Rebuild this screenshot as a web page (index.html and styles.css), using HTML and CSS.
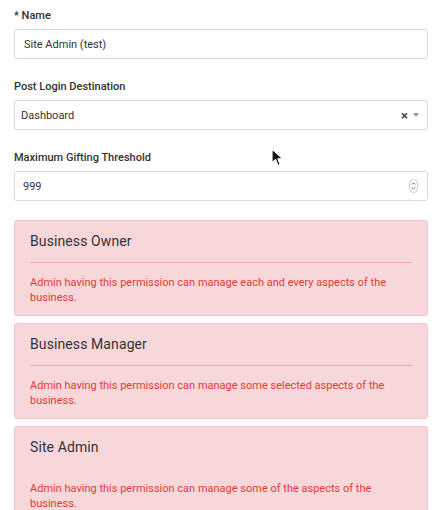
FILE: index.html
```html
<!DOCTYPE html>
<html lang="en">
<head>
  <meta charset="UTF-8" />
  <title>Edit Role</title>
  <link rel="stylesheet" href="styles.css">
</head>

<body>
  <form class="role-form">
    <div class="fields">
      <div class="field">
        <label class="field-label">* Name</label>
        <div class="control">Site Admin (test)</div>
      </div>

      <div class="field">
        <label class="field-label">Post Login Destination</label>
        <div class="control select">
          <span>Dashboard</span>
          <span class="select-icons">
            <span class="clear">&#215;</span>
            <span class="caret"></span>
          </span>
        </div>
      </div>

      <div class="field">
        <label class="field-label">Maximum Gifting Threshold</label>
        <div class="control number">
          <span>999</span>
          <!-- spinner buttons of the number input -->
          <svg class="spinner" width="9" height="14" viewBox="0 0 9 14">
            <rect x="0.5" y="0.5" width="8" height="13" rx="4" fill="#fff" stroke="#c8c8c8" />
            <path d="M2.8 5.5 L4.5 3.8 L6.2 5.5" fill="none" stroke="#666" stroke-width="0.9" />
            <path d="M2.8 8.5 L4.5 10.2 L6.2 8.5" fill="none" stroke="#666" stroke-width="0.9" />
          </svg>
        </div>
      </div>
    </div>

    <!-- permission cards -->
    <div class="perm-card">
      <div class="perm-title">Business Owner</div>
      <div class="perm-text">Admin having this permission can manage each and every aspects of the business.</div>
    </div>

    <div class="perm-card">
      <div class="perm-title">Business Manager</div>
      <div class="perm-text">Admin having this permission can manage some selected aspects of the business.</div>
    </div>

    <div class="perm-card no-rule">
      <div class="perm-title">Site Admin</div>
      <div class="perm-text">Admin having this permission can manage some of the aspects of the business.</div>
    </div>
  </form>

  <!-- mouse pointer -->
  <svg class="pointer" width="14" height="20" viewBox="0 0 14 20">
    <path d="M1 1 L1 15 L4.5 11.6 L7 17.5 L9.3 16.5 L6.9 10.8 L11.8 10.8 Z" fill="#111" stroke="#fff" stroke-width="1.2" stroke-linejoin="round" />
  </svg>
</body>
</html>
```

FILE: styles.css
```css
body {
  font-family: Roboto, "Liberation Sans", sans-serif;
  background: #fff;
  color: #333;
  margin: 0;
  padding: 8px 11px 0 14px;
  overflow: hidden;
}

.field {
  margin-bottom: 20px;
}

.fields .field:last-child {
  margin-bottom: 19px;
}

.field-label {
  display: block;
  font-size: 11px;
  font-weight: 500;
  line-height: 15px;
  margin-bottom: 6px;
  color: #333;
}

.control {
  display: flex;
  align-items: center;
  justify-content: space-between;
  height: 30px;
  box-sizing: border-box;
  padding: 0 8px 0 9px;
  border: 1px solid #d6d8e7;
  border-radius: 3px;
  font-size: 11px;
  color: #333;
}

.select {
  padding-left: 6px;
}

.number {
  padding-left: 8px;
}

.select-icons {
  display: flex;
  align-items: center;
  gap: 5px;
}

.clear {
  font-size: 13px;
  font-weight: bold;
  color: #444;
  line-height: 1;
}

.caret {
  width: 0;
  height: 0;
  border-left: 3.5px solid transparent;
  border-right: 3.5px solid transparent;
  border-top: 4px solid #999;
}

.spinner {
  display: block;
  margin-right: 1px;
}

/* Permission cards */
.perm-card {
  background: #f8d7da;
  border: 1px solid #f5c2c7;
  border-radius: 3px;
  padding: 11px 15px 10px;
  margin-bottom: 7px;
}

.perm-title {
  font-size: 14px;
  line-height: 18px;
  color: #333;
  letter-spacing: 0.1px;
  padding-bottom: 12px;
  border-bottom: 1px solid #f0a7ae;
  margin-bottom: 12px;
}

.no-rule .perm-title {
  border-bottom-color: transparent;
}

.perm-text {
  font-size: 11px;
  line-height: 15px;
  color: #e53935;
}

.pointer {
  position: absolute;
  left: 271px;
  top: 148px;
}
```
